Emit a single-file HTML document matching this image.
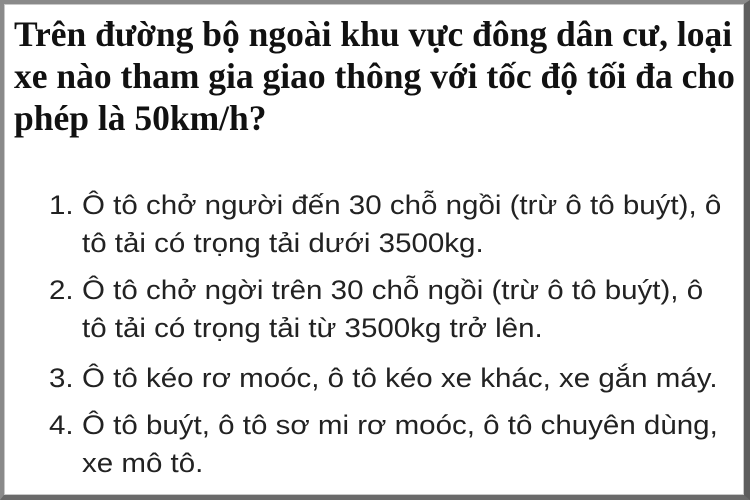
<!DOCTYPE html>
<html><head><meta charset="utf-8"><style>
html,body{margin:0;padding:0;}
body{width:750px;height:500px;overflow:hidden;background:#fff;position:relative;}
.frame{position:absolute;left:0;top:0;width:750px;height:500px;box-sizing:border-box;border-style:solid;border-color:#8a8a8a #5e5e5e #6a6a6a #8a8a8a;border-width:4px 6px 5px 4px;}
.inner{position:absolute;left:4px;top:4px;right:6px;bottom:5px;border:1px solid #c8c8c8;}
h1{position:absolute;left:14px;top:13px;margin:0;white-space:nowrap;font:bold 35.5px/42px "Liberation Serif",serif;color:#111;}
.l{position:absolute;white-space:nowrap;font:27px/38px "Liberation Sans",sans-serif;color:#222;transform:scaleX(1.093);transform-origin:0 0;}
</style></head><body>
<div class="frame"></div><div class="inner"></div>
<h1>Trên đường bộ ngoài khu vực đông dân cư, loại<br>xe nào tham gia giao thông với tốc độ tối đa cho<br>phép là 50km/h?</h1>
<div class="l" style="left:49px;top:186px">1.</div>
<div class="l" style="left:82px;top:186px">Ô tô chở người đến 30 chỗ ngồi (trừ ô tô buýt), ô<br>tô tải có trọng tải dưới 3500kg.</div>
<div class="l" style="left:49px;top:271px">2.</div>
<div class="l" style="left:82px;top:271px">Ô tô chở ngời trên 30 chỗ ngồi (trừ ô tô buýt), ô<br>tô tải có trọng tải từ 3500kg trở lên.</div>
<div class="l" style="left:49px;top:359px">3.</div>
<div class="l" style="left:82px;top:359px">Ô tô kéo rơ moóc, ô tô kéo xe khác, xe gắn máy.</div>
<div class="l" style="left:49px;top:406px">4.</div>
<div class="l" style="left:82px;top:406px">Ô tô buýt, ô tô sơ mi rơ moóc, ô tô chuyên dùng,<br>xe mô tô.</div>
</body></html>
